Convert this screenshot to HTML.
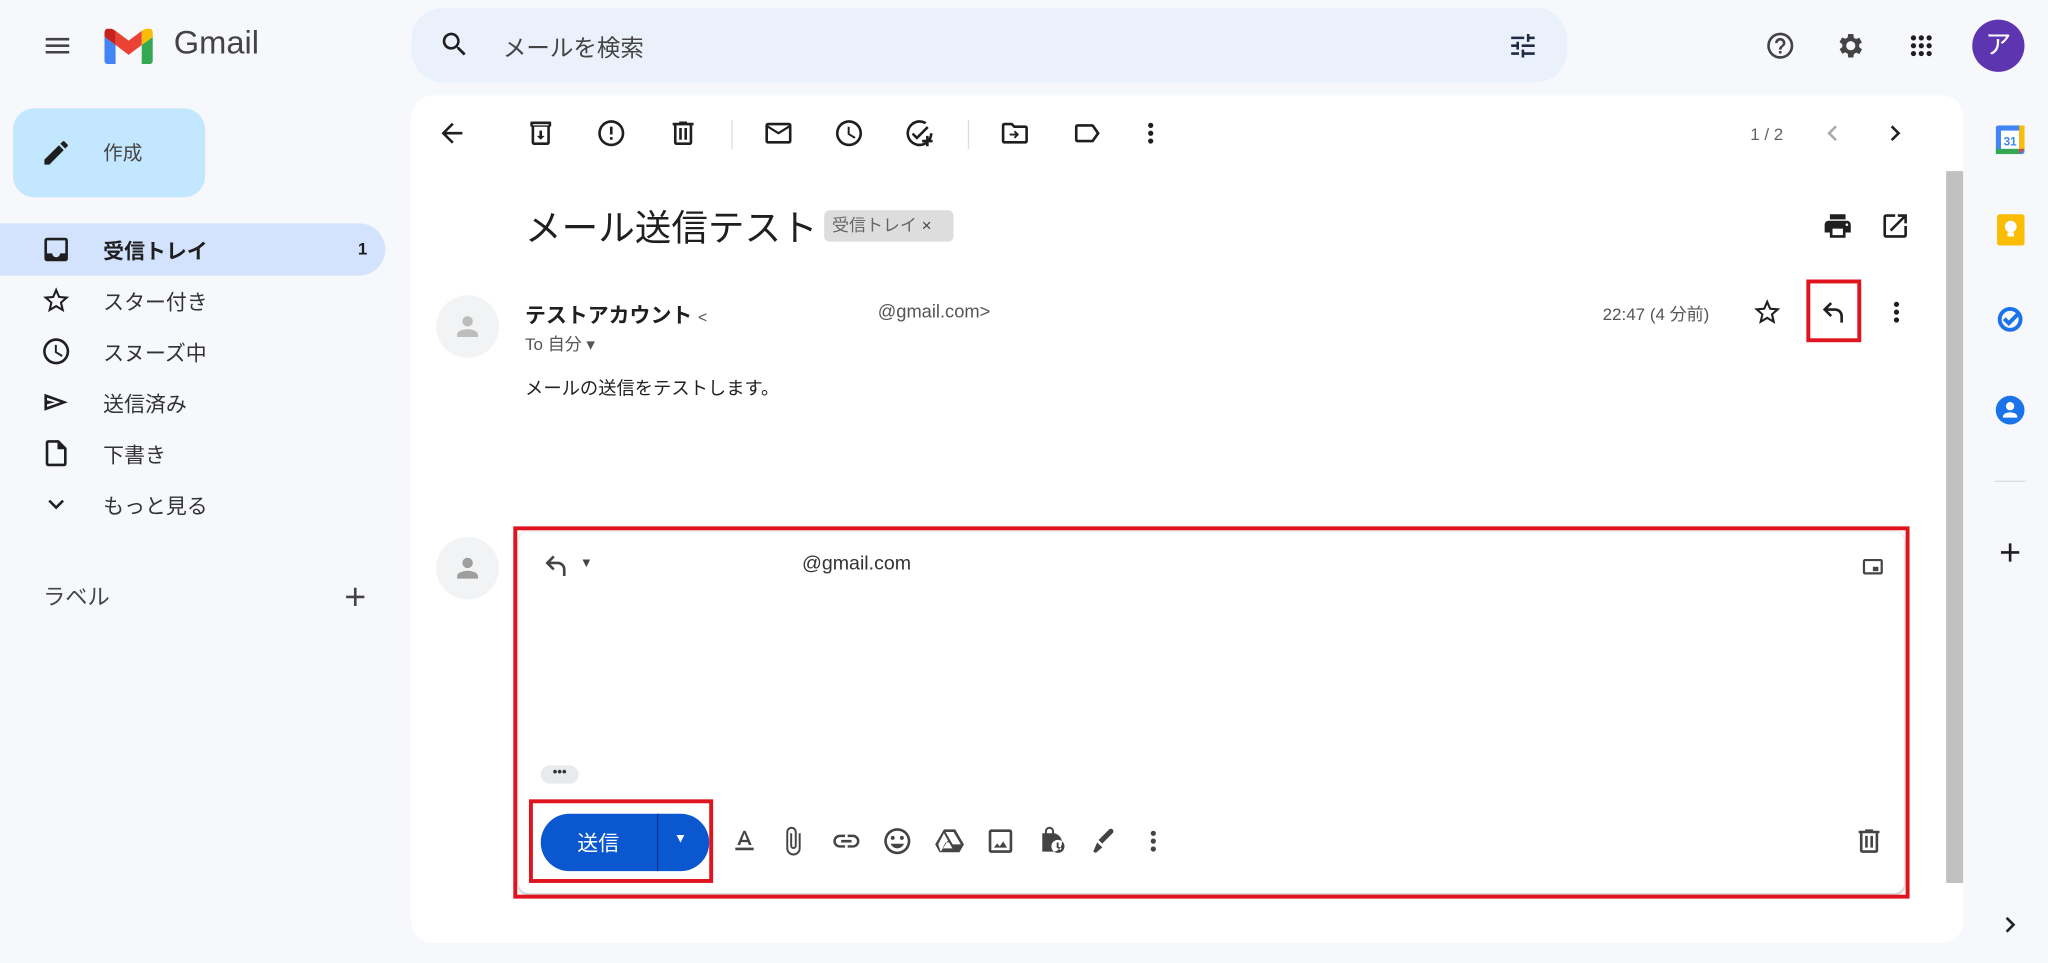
<!DOCTYPE html>
<html><head><meta charset="utf-8"><style>
html,body{margin:0;padding:0;width:2048px;height:963px;overflow:hidden;background:#f6f8fc}
#w{position:absolute;left:0;top:0;width:1568px;height:737px;transform:scale(1.30612);transform-origin:0 0;font-family:"Liberation Sans","Noto Sans CJK JP",sans-serif;color:#1f1f1f}
.a{position:absolute}
svg.i{position:absolute;width:24px;height:24px;fill:#1f1f1f}
.t{position:absolute;white-space:nowrap}
</style></head><body><div id="w">
<svg class="i" style="left:32px;top:23px" viewBox="0 0 24 24"><path d="M3 18h18v-2H3v2zm0-5h18v-2H3v2zm0-7v2h18V6H3z" fill="#444"/></svg>
<svg class="a" style="left:80px;top:22px" width="37" height="27" viewBox="0 0 37 27"><path d="M2.5 27h6V12.5L0 6.2V24.5C0 25.9 1.1 27 2.5 27z" fill="#4285f4"/><path d="M28.5 27h6c1.4 0 2.5-1.1 2.5-2.5V6.2l-8.5 6.3z" fill="#34a853"/><path d="M28.5 1.6v10.9L37 6.2V3c0-3-3.4-4.7-5.8-2.9z" fill="#fbbc04"/><path d="M8.5 12.5V1.6l10 7.5 10-7.5v10.9l-10 7.5z" fill="#ea4335"/><path d="M0 3v3.2l8.5 6.3V1.6L5.8.1C3.4-1.7 0 0 0 3z" fill="#c5221f"/></svg>
<div class="t" style="left:133px;top:19px;font-size:25px;color:#444">Gmail</div>
<div class="a" style="left:315px;top:6px;width:885px;height:57px;border-radius:24px;background:#eaf1fb"></div>
<svg class="i" style="left:336px;top:22px" viewBox="0 0 24 24"><path d="M15.5 14h-.8l-.3-.3A6.5 6.5 0 1 0 9.5 16c1.6 0 3.1-.6 4.2-1.6l.3.3v.8l5 5 1.5-1.5-5-5zm-6 0C7 14 5 12 5 9.5S7 5 9.5 5 14 7 14 9.5 12 14 9.5 14z"/></svg>
<div class="t" style="left:385px;top:23px;font-size:18px;color:#444">メールを検索</div>
<svg class="i" style="left:1154px;top:23px" viewBox="0 0 24 24"><path d="M3 17v2h6v-2H3zM3 5v2h10V5H3zm10 16v-2h8v-2h-8v-2h-2v6h2zM7 9v2H3v2h4v2h2V9H7zm14 4v-2H11v2h10zm-6-4h2V7h4V5h-4V3h-2v6z" fill="#1f2a44"/></svg>
<svg class="i" style="left:1351px;top:23px" viewBox="0 0 24 24"><path d="M11 18h2v-2h-2v2zm1-16a10 10 0 1 0 0 20 10 10 0 0 0 0-20zm0 18a8 8 0 1 1 0-16 8 8 0 0 1 0 16zm0-14a4 4 0 0 0-4 4h2a2 2 0 1 1 4 0c0 2-3 1.8-3 5h2c0-2.3 3-2.5 3-5a4 4 0 0 0-4-4z" fill="#444"/></svg>
<svg class="i" style="left:1405px;top:23px" viewBox="0 0 24 24"><path d="M19.4 13a7 7 0 0 0 0-2l2.1-1.6-2-3.5-2.5 1a7 7 0 0 0-1.7-1L15 3h-4l-.4 2.7a7 7 0 0 0-1.7 1l-2.5-1-2 3.5L6.6 11a7 7 0 0 0 0 2l-2.1 1.6 2 3.5 2.5-1c.5.4 1.1.8 1.7 1L11 21h4l.4-2.7c.6-.3 1.2-.6 1.7-1l2.5 1 2-3.5L19.4 13zM13 15.5a3.5 3.5 0 1 1 0-7 3.5 3.5 0 0 1 0 7z" fill="#444" transform="translate(-1 0)"/></svg>
<svg class="i" style="left:1459px;top:23px" viewBox="0 0 24 24" fill="#444"><circle cx="6" cy="6" r="2"/><circle cx="12" cy="6" r="2"/><circle cx="18" cy="6" r="2"/><circle cx="6" cy="12" r="2"/><circle cx="12" cy="12" r="2"/><circle cx="18" cy="12" r="2"/><circle cx="6" cy="18" r="2"/><circle cx="12" cy="18" r="2"/><circle cx="18" cy="18" r="2"/></svg>
<div class="a" style="left:1510px;top:15px;width:40px;height:40px;border-radius:50%;background:#5e35b1;color:#fff;font-size:20px;text-align:center;line-height:40px">ア</div>
<div class="a" style="left:10px;top:83px;width:147px;height:68px;border-radius:16px;background:#c2e7ff"></div>
<svg class="i" style="left:31px;top:105px" viewBox="0 0 24 24"><path d="M3 17.2V21h3.8L17.8 9.9l-3.7-3.7L3 17.2zM20.7 7a1 1 0 0 0 0-1.4l-2.3-2.3a1 1 0 0 0-1.4 0l-1.8 1.8 3.7 3.7L20.7 7z"/></svg>
<div class="t" style="left:79px;top:106px;font-size:15px;color:#444">作成</div>
<div class="a" style="left:0;top:171px;width:295px;height:40px;border-radius:0 20px 20px 0;background:#d3e3fd"></div>
<svg class="i" style="left:31px;top:179px" viewBox="0 0 24 24"><path d="M19 3H5a2 2 0 0 0-2 2v14a2 2 0 0 0 2 2h14a2 2 0 0 0 2-2V5a2 2 0 0 0-2-2zm0 12h-4a3 3 0 0 1-6 0H5V5h14v10z"/></svg>
<div class="t" style="left:79px;top:179px;font-size:16px;font-weight:bold">受信トレイ</div>
<div class="t" style="left:274px;top:183px;font-size:13px;font-weight:bold">1</div>
<svg class="i" style="left:31px;top:218px" viewBox="0 0 24 24"><path d="M22 9.2l-7.2-.6L12 2 9.2 8.6 2 9.2l5.5 4.7L5.8 21l6.2-3.7 6.2 3.7-1.6-7.1L22 9.2zM12 15.4l-3.8 2.3 1-4.3-3.3-2.9 4.4-.4L12 6.1l1.7 4 4.4.4-3.3 2.9 1 4.3-3.8-2.3z"/></svg>
<div class="t" style="left:79px;top:218px;font-size:16px;color:#333">スター付き</div>
<svg class="i" style="left:31px;top:257px" viewBox="0 0 24 24"><path d="M12 2a10 10 0 1 0 0 20 10 10 0 0 0 0-20zm0 18a8 8 0 1 1 0-16 8 8 0 0 1 0 16zm.5-13H11v6l5.2 3.2.8-1.3-4.5-2.7V7z"/></svg>
<div class="t" style="left:79px;top:257px;font-size:16px;color:#333">スヌーズ中</div>
<svg class="i" style="left:31px;top:296px" viewBox="0 0 24 24"><path d="M3 5.5v13L21 12 3 5.5zm2 2.9L15.2 12 5 15.6v-2.1L11 12 5 10.5V8.4z"/></svg>
<div class="t" style="left:79px;top:296px;font-size:16px;color:#333">送信済み</div>
<svg class="i" style="left:31px;top:335px" viewBox="0 0 24 24"><path d="M14 2H6a2 2 0 0 0-2 2v16a2 2 0 0 0 2 2h12a2 2 0 0 0 2-2V8l-6-6zm4 18H6V4h7v5h5v11z"/></svg>
<div class="t" style="left:79px;top:335px;font-size:16px;color:#333">下書き</div>
<svg class="i" style="left:31px;top:374px" viewBox="0 0 24 24"><path d="M16.6 8.6L12 13.2 7.4 8.6 6 10l6 6 6-6z"/></svg>
<div class="t" style="left:79px;top:374px;font-size:16px;color:#333">もっと見る</div>
<div class="t" style="left:33px;top:443px;font-size:17px;color:#444">ラベル</div>
<svg class="i" style="left:260px;top:445px" viewBox="0 0 24 24"><path d="M19 13h-6v6h-2v-6H5v-2h6V5h2v6h6v2z" fill="#444"/></svg>
<div class="a" style="left:315px;top:73px;width:1188px;height:649px;border-radius:16px;background:#fff"></div>
<div class="a" style="left:1490px;top:131px;width:13px;height:545px;background:#c1c1c1"></div>
<svg class="i" style="left:334px;top:90px" viewBox="0 0 24 24"><path d="M20 11H7.8l5.6-5.6L12 4l-8 8 8 8 1.4-1.4L7.8 13H20v-2z"/></svg>
<svg class="i" style="left:402px;top:90px" viewBox="0 0 24 24"><path d="M20 6V4a1 1 0 0 0-1-1H5a1 1 0 0 0-1 1v2a1 1 0 0 0 1 1v12a2 2 0 0 0 2 2h10a2 2 0 0 0 2-2V7a1 1 0 0 0 1-1zM6 5h12v1H6V5zm11 14H7V7h10v12zm-4-9h-2v4H9l3 3 3-3h-2v-4z"/></svg>
<svg class="i" style="left:456px;top:90px" viewBox="0 0 24 24"><path d="M12 2a10 10 0 1 0 0 20 10 10 0 0 0 0-20zm0 18a8 8 0 1 1 0-16 8 8 0 0 1 0 16zm-1-5h2v2h-2zm0-8h2v6h-2z"/></svg>
<svg class="i" style="left:511px;top:90px" viewBox="0 0 24 24"><path d="M15 4V3H9v1H4v2h1v13a2 2 0 0 0 2 2h10a2 2 0 0 0 2-2V6h1V4h-5zm2 15H7V6h10v13zM9 8h2v9H9zm4 0h2v9h-2z"/></svg>
<div class="a" style="left:560px;top:92px;width:1px;height:22px;background:#ddd"></div>
<svg class="i" style="left:584px;top:90px" viewBox="0 0 24 24"><path d="M20 4H4a2 2 0 0 0-2 2v12a2 2 0 0 0 2 2h16a2 2 0 0 0 2-2V6a2 2 0 0 0-2-2zm0 14H4V8l8 5 8-5v10zm-8-7L4 6h16l-8 5z"/></svg>
<svg class="i" style="left:638px;top:90px" viewBox="0 0 24 24"><path d="M12 2a10 10 0 1 0 0 20 10 10 0 0 0 0-20zm0 18a8 8 0 1 1 0-16 8 8 0 0 1 0 16zm.5-13H11v6l5.2 3.2.8-1.3-4.5-2.7V7z"/></svg>
<svg class="i" style="left:692px;top:90px" viewBox="0 0 24 24"><path d="M12 20a8 8 0 0 1 0-16c1.5 0 2.9.4 4 1.1l1.4-1.5A10 10 0 1 0 22 12h-2a8 8 0 0 1-8 8zM7.4 11.6L6 13l4 4 9-9-1.4-1.4-7.6 7.6-2.6-2.6zM19 14h-2v3h-3v2h3v3h2v-3h3v-2h-3z"/></svg>
<div class="a" style="left:741px;top:92px;width:1px;height:22px;background:#ddd"></div>
<svg class="i" style="left:765px;top:90px" viewBox="0 0 24 24"><path d="M20 6h-8l-2-2H4a2 2 0 0 0-2 2v12a2 2 0 0 0 2 2h16a2 2 0 0 0 2-2V8a2 2 0 0 0-2-2zm0 12H4V6h5.2l2 2H20v10zm-7.8-2l3-3-3-3-1 1 1.3 1.3H8v1.4h4.5L11.2 15z"/></svg>
<svg class="i" style="left:820px;top:90px" viewBox="0 0 24 24"><path d="M17.6 5.8A2 2 0 0 0 16 5H5a2 2 0 0 0-2 2v10a2 2 0 0 0 2 2h11c.7 0 1.2-.3 1.6-.8L22 12l-4.4-6.2zM16 17H5V7h11l3.5 5L16 17z"/></svg>
<svg class="i" style="left:869px;top:90px" viewBox="0 0 24 24"><path d="M12 8a2 2 0 1 0 0-4 2 2 0 0 0 0 4zm0 2a2 2 0 1 0 0 4 2 2 0 0 0 0-4zm0 6a2 2 0 1 0 0 4 2 2 0 0 0 0-4z"/></svg>
<div class="t" style="left:1340px;top:95px;font-size:13px;color:#5f6368">1 / 2</div>
<svg class="i" style="left:1391px;top:90px" viewBox="0 0 24 24"><path d="M15.4 7.4L14 6l-6 6 6 6 1.4-1.4L10.8 12z" fill="#aaa"/></svg>
<svg class="i" style="left:1439px;top:90px" viewBox="0 0 24 24"><path d="M10 6L8.6 7.4 13.2 12l-4.6 4.6L10 18l6-6z"/></svg>
<div class="t" style="left:402px;top:153px;font-size:28px;color:#1f1f1f">メール送信テスト</div>
<div class="t" style="left:631px;top:161px;height:24px;line-height:23px;padding:0 6px;border-radius:4px;background:#ddd;font-size:13px;color:#666;box-sizing:border-box;width:99px">受信トレイ <span style="color:#444">×</span></div>
<svg class="i" style="left:1395px;top:161px" viewBox="0 0 24 24"><path d="M19 8H5a3 3 0 0 0-3 3v6h4v4h12v-4h4v-6a3 3 0 0 0-3-3zm-3 11H8v-5h8v5zm3-7a1 1 0 1 1 0-2 1 1 0 0 1 0 2zm-1-9H6v4h12V3z"/></svg>
<svg class="i" style="left:1439px;top:161px" viewBox="0 0 24 24"><path d="M19 19H5V5h7V3H5a2 2 0 0 0-2 2v14a2 2 0 0 0 2 2h14a2 2 0 0 0 2-2v-7h-2v7zM14 3v2h3.6l-9.8 9.8 1.4 1.4L19 6.4V10h2V3h-7z"/></svg>
<div class="a" style="left:334px;top:226px;width:48px;height:48px;border-radius:50%;background:#f1f3f4"></div>
<svg class="i" style="left:346px;top:238px" viewBox="0 0 24 24"><path d="M12 12a4 4 0 1 0 0-8 4 4 0 0 0 0 8zm0 2c-2.7 0-8 1.3-8 4v2h16v-2c0-2.7-5.3-4-8-4z" fill="#bdbdbd"/></svg>
<div class="t" style="left:402px;top:228px;font-size:16px;font-weight:bold">テストアカウント <span style="font-size:12px;font-weight:normal;color:#555">&lt;</span></div>
<div class="t" style="left:672px;top:230px;font-size:14px;color:#555">@gmail.com&gt;</div>
<div class="t" style="left:402px;top:253px;font-size:13px;color:#555">To 自分 ▾</div>
<div class="t" style="left:1227px;top:230px;font-size:13px;color:#555">22:47 (4 分前)</div>
<svg class="i" style="left:1341px;top:227px" viewBox="0 0 24 24"><path d="M22 9.2l-7.2-.6L12 2 9.2 8.6 2 9.2l5.5 4.7L5.8 21l6.2-3.7 6.2 3.7-1.6-7.1L22 9.2zM12 15.4l-3.8 2.3 1-4.3-3.3-2.9 4.4-.4L12 6.1l1.7 4 4.4.4-3.3 2.9 1 4.3-3.8-2.3z"/></svg>
<div class="a" style="left:1383px;top:214px;width:36px;height:42px;border:3px solid #e0141e"></div>
<svg class="i" style="left:1392px;top:227px" viewBox="0 0 24 24"><path d="M10 5L5 10l5 5M5 10h8a5 5 0 0 1 5 5v5" fill="none" stroke="#1f1f1f" stroke-width="2"/></svg>
<svg class="i" style="left:1440px;top:227px" viewBox="0 0 24 24"><path d="M12 8a2 2 0 1 0 0-4 2 2 0 0 0 0 4zm0 2a2 2 0 1 0 0 4 2 2 0 0 0 0-4zm0 6a2 2 0 1 0 0 4 2 2 0 0 0 0-4z"/></svg>
<div class="t" style="left:402px;top:287px;font-size:14px;color:#222">メールの送信をテストします。</div>
<div class="a" style="left:334px;top:411px;width:48px;height:48px;border-radius:50%;background:#f1f3f4"></div>
<svg class="i" style="left:346px;top:423px" viewBox="0 0 24 24"><path d="M12 12a4 4 0 1 0 0-8 4 4 0 0 0 0 8zm0 2c-2.7 0-8 1.3-8 4v2h16v-2c0-2.7-5.3-4-8-4z" fill="#9e9e9e"/></svg>
<div class="a" style="left:397px;top:407px;width:1061px;height:277px;background:#fff;box-shadow:0 1px 3px rgba(0,0,0,.3);border-radius:8px"></div>
<div class="a" style="left:393px;top:403px;width:1063px;height:279px;border:3px solid #e0141e"></div>
<svg class="i" style="left:414px;top:421px" viewBox="0 0 24 24"><path d="M10 5L5 10l5 5M5 10h8a5 5 0 0 1 5 5v5" fill="none" stroke="#444" stroke-width="2"/></svg>
<div class="t" style="left:444px;top:426px;font-size:10px;color:#444">▼</div>
<div class="t" style="left:614px;top:423px;font-size:15px;color:#333">@gmail.com</div>
<svg class="i" style="left:1422px;top:422px" viewBox="0 0 24 24"><path d="M19 5H5a2 2 0 0 0-2 2v10a2 2 0 0 0 2 2h14a2 2 0 0 0 2-2V7a2 2 0 0 0-2-2zm0 12H5V7h14v10zm-2-5h-5v4h5v-4z" fill="#444" transform="scale(.85) translate(2 2)"/></svg>
<div class="a" style="left:414px;top:586px;width:29px;height:14px;border-radius:7px;background:#e8eaed;font-size:10px;line-height:12px;text-align:center;font-weight:bold;color:#333">•••</div>
<div class="a" style="left:405px;top:612px;width:135px;height:58px;border:3px solid #e0141e"></div>
<div class="a" style="left:414px;top:623px;width:129px;height:44px;border-radius:22px;background:#0b57d0"></div>
<div class="a" style="left:503px;top:623px;width:1px;height:44px;background:#073a8f"></div>
<div class="t" style="left:442px;top:632px;font-size:16px;color:#fff">送信</div>
<div class="t" style="left:516px;top:637px;font-size:10px;color:#fff">▼</div>
<svg class="i" style="left:558px;top:632px" viewBox="0 0 24 24"><path d="M5 17v2h14v-2H5zm4.5-4.2h5l.9 2.2h2.1L12.8 4h-1.6L6.5 15h2.1l.9-2.2zM12 6l1.9 5h-3.8L12 6z" fill="#444"/></svg>
<svg class="i" style="left:595px;top:632px" viewBox="0 0 24 24"><path d="M16.5 6v11.5a4 4 0 0 1-8 0V5a2.5 2.5 0 0 1 5 0v10.5a1 1 0 0 1-2 0V6H10v9.5a2.5 2.5 0 0 0 5 0V5a4 4 0 0 0-8 0v12.5a5.5 5.5 0 0 0 11 0V6h-1.5z" fill="#444"/></svg>
<svg class="i" style="left:636px;top:632px" viewBox="0 0 24 24"><path d="M3.9 12c0-1.7 1.4-3.1 3.1-3.1h4V7H7a5 5 0 0 0 0 10h4v-1.9H7c-1.7 0-3.1-1.4-3.1-3.1zM8 13h8v-2H8v2zm9-6h-4v1.9h4c1.7 0 3.1 1.4 3.1 3.1s-1.4 3.1-3.1 3.1h-4V17h4a5 5 0 0 0 0-10z" fill="#444"/></svg>
<svg class="i" style="left:675px;top:632px" viewBox="0 0 24 24"><path d="M12 2a10 10 0 1 0 0 20 10 10 0 0 0 0-20zm0 18a8 8 0 1 1 0-16 8 8 0 0 1 0 16zm3.5-9a1.5 1.5 0 1 0 0-3 1.5 1.5 0 0 0 0 3zm-7 0a1.5 1.5 0 1 0 0-3 1.5 1.5 0 0 0 0 3zm3.5 6.5c2.3 0 4.3-1.5 5.1-3.5H6.9c.8 2 2.8 3.5 5.1 3.5z" fill="#444"/></svg>
<svg class="i" style="left:715px;top:632px" viewBox="0 0 24 24"><path d="M7.7 3L1 14.5 4.4 20.5h15.2L23 14.5 16.3 3H7.7zm1.2 2h6.2l5.6 9.5h-6.3L8.9 5zm-1.2 1l3.1 5.4L5.3 20 3.3 14.5 7.7 6zm3.9 6.9l2.6 4.6H6.5l2.6-4.6h2.5z" fill="#444"/></svg>
<svg class="i" style="left:754px;top:632px" viewBox="0 0 24 24"><path d="M19 3H5a2 2 0 0 0-2 2v14a2 2 0 0 0 2 2h14a2 2 0 0 0 2-2V5a2 2 0 0 0-2-2zm0 16H5V5h14v14zm-4.9-6.8L11.4 16l-1.9-2.3L7 17h10l-2.9-4.8z" fill="#444"/></svg>
<svg class="i" style="left:794px;top:632px" viewBox="0 0 24 24"><path d="M13 6V4.5a3.5 3.5 0 0 0-7 0V6H4v14h7a7 7 0 1 0 2-14zM7.5 4.5a2 2 0 0 1 4 0V6h-4V4.5zM16 21a5 5 0 1 1 0-10 5 5 0 0 1 0 10zm.5-8H15v4l3 1.8.8-1.2-2.3-1.4V13z" fill="#444"/></svg>
<svg class="i" style="left:833px;top:632px" viewBox="0 0 24 24"><path d="M18.9 3.1a2 2 0 0 0-2.8 0l-8 8 2.8 2.8 8-8a2 2 0 0 0 0-2.8zM7 13l-3 7 2 1 5-4.2L7 13z" fill="#444"/></svg>
<svg class="i" style="left:871px;top:632px" viewBox="0 0 24 24"><path d="M12 8a2 2 0 1 0 0-4 2 2 0 0 0 0 4zm0 2a2 2 0 1 0 0 4 2 2 0 0 0 0-4zm0 6a2 2 0 1 0 0 4 2 2 0 0 0 0-4z" fill="#444"/></svg>
<svg class="i" style="left:1419px;top:632px" viewBox="0 0 24 24"><path d="M15 4V3H9v1H4v2h1v13a2 2 0 0 0 2 2h10a2 2 0 0 0 2-2V6h1V4h-5zm2 15H7V6h10v13zM9 8h2v9H9zm4 0h2v9h-2z" fill="#444"/></svg>
<svg class="a" style="left:1528px;top:96px" width="22" height="22" viewBox="0 0 22 22"><rect x="0" y="0" width="22" height="22" rx="2" fill="#4285f4"/><rect x="4" y="4" width="14" height="14" fill="#fff"/><rect x="0" y="18" width="18" height="4" fill="#34a853"/><rect x="18" y="0" width="4" height="18" fill="#fbbc04"/><path d="M18 18h4l-4 4z" fill="#ea4335"/><text x="11" y="15.5" font-size="9" font-weight="bold" text-anchor="middle" fill="#4285f4" font-family="Liberation Sans">31</text></svg>
<div class="a" style="left:1529px;top:164px;width:21px;height:24px;border-radius:2px;background:#fbbc04"></div>
<div class="a" style="left:1535px;top:169px;width:9px;height:9px;border-radius:50%;background:#fff"></div>
<div class="a" style="left:1537px;top:178px;width:5px;height:3px;background:#fff"></div>
<svg class="i" style="left:1527px;top:232px" viewBox="0 0 24 24"><circle cx="12" cy="12.5" r="8" fill="none" stroke="#1a73e8" stroke-width="3"/><path d="M7.5 12l3.5 3.5 8-8" fill="none" stroke="#1a73e8" stroke-width="3"/></svg>
<svg class="i" style="left:1527px;top:302px" viewBox="0 0 24 24"><circle cx="12" cy="12" r="11" fill="#1a73e8"/><circle cx="12" cy="9" r="3.2" fill="#fff"/><path d="M6.5 17c0-2.5 3.5-3.3 5.5-3.3s5.5.8 5.5 3.3v.7h-11z" fill="#fff"/></svg>
<div class="a" style="left:1527px;top:368px;width:24px;height:1px;background:#ddd"></div>
<svg class="i" style="left:1527px;top:411px" viewBox="0 0 24 24"><path d="M19 13h-6v6h-2v-6H5v-2h6V5h2v6h6v2z"/></svg>
<svg class="i" style="left:1527px;top:696px" viewBox="0 0 24 24"><path d="M10 6L8.6 7.4 13.2 12l-4.6 4.6L10 18l6-6z"/></svg>
</div></body></html>
